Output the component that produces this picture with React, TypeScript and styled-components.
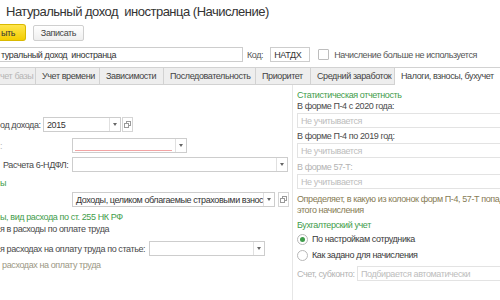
import React from "react";
import styled, { createGlobalStyle, css } from "styled-components";

const GlobalStyle = createGlobalStyle`
  html, body {
    margin: 0;
    padding: 0;
    background: #fff;
  }
  body {
    font-family: "Liberation Sans", Arial, sans-serif;
    font-size: 9px;
    letter-spacing: -0.4px;
    color: #404040;
  }
`;

const GREEN = "#3f9d4b";

const Page = styled.div`
  width: 500px;
  height: 300px;
  overflow: hidden;
  background: #fff;
`;

const Title = styled.h1`
  margin: 0;
  padding: 3px 0 0 6px;
  height: 18px;
  line-height: 18px;
  font-size: 13px;
  letter-spacing: -0.5px;
  font-weight: normal;
  color: #333;
  white-space: nowrap;
`;

const Toolbar = styled.div`
  display: flex;
  align-items: center;
  padding-top: 3px;
  height: 17px;
`;

const MainButton = styled.div`
  box-sizing: border-box;
  width: 26px;
  height: 17px;
  display: flex;
  align-items: center;
  justify-content: flex-end;
  padding-right: 10px;
  background: linear-gradient(#ffe54d, #f3cd00);
  border: 1px solid #d9b900;
  border-left: none;
  border-radius: 0 3px 3px 0;
  color: #333;
`;

const Button = styled.div`
  box-sizing: border-box;
  margin-left: 7px;
  width: 51px;
  height: 16px;
  display: flex;
  align-items: center;
  justify-content: center;
  background: linear-gradient(#ffffff, #efefef);
  border: 1px solid #cfcfcf;
  border-radius: 2px;
  color: #444;
`;

const HeadRow = styled.div`
  display: flex;
  align-items: center;
  margin-top: 6px;
  height: 15px;
  white-space: nowrap;
`;

const Input = styled.div<{ $w: number; $ml?: number; $open?: boolean; $muted?: boolean }>`
  box-sizing: border-box;
  flex: none;
  width: ${(p) => p.$w}px;
  margin-left: ${(p) => p.$ml ?? 0}px;
  height: 15px;
  display: flex;
  align-items: center;
  padding-left: 3px;
  border: 1px solid ${(p) => (p.$muted ? "#e3e3e3" : "#cdcdcd")};
  background: #fff;
  color: ${(p) => (p.$muted ? "#bdbdbd" : "#333")};
  white-space: nowrap;
  overflow: hidden;
  ${(p) =>
    p.$open &&
    css`
      border-left: none;
      padding-left: 1px;
    `}
`;

const Caption = styled.span<{ $ml?: number }>`
  margin-left: ${(p) => p.$ml ?? 0}px;
  color: #555;
`;

const CheckBox = styled.span`
  box-sizing: border-box;
  flex: none;
  margin-left: 8px;
  width: 11px;
  height: 11px;
  border: 1px solid #bdbdbd;
  border-radius: 1px;
  background: #fff;
`;

const TabBar = styled.div`
  display: flex;
  margin-top: 5px;
  height: 18px;
  white-space: nowrap;
`;

const Tab = styled.div<{ $w: number; $pl?: number; $active?: boolean; $disabled?: boolean }>`
  box-sizing: border-box;
  flex: none;
  width: ${(p) => p.$w}px;
  display: flex;
  align-items: center;
  padding-left: ${(p) => p.$pl ?? 6}px;
  border: 1px solid #d2d2d2;
  border-left: none;
  overflow: hidden;
  background: ${(p) => (p.$active ? "#fff" : "#eeeeee")};
  color: ${(p) => (p.$disabled ? "#b5b5b5" : "#444")};
  ${(p) =>
    p.$active &&
    css`
      border-bottom-color: #fff;
    `}
`;

const Body = styled.div`
  display: grid;
  grid-template-columns: 293px 1fr;
  height: 215px;
`;

const LeftCol = styled.div`
  box-sizing: border-box;
  border-right: 1px solid #e6e6e6;
  padding-top: 32px;
  white-space: nowrap;
  overflow: hidden;
`;

const RightCol = styled.div`
  padding-left: 4px;
  padding-top: 5px;
  white-space: nowrap;
  overflow: hidden;
`;

const FieldRow = styled.div<{ $mt?: number }>`
  display: flex;
  align-items: center;
  height: 15px;
  margin-top: ${(p) => p.$mt ?? 0}px;
`;

const Label = styled.span<{ $w: number; $pl?: number; $muted?: boolean }>`
  box-sizing: border-box;
  flex: none;
  width: ${(p) => p.$w}px;
  padding-left: ${(p) => p.$pl ?? 0}px;
  color: ${(p) => (p.$muted ? "#b3b3b3" : "#4a4a4a")};
`;

const Line = styled.div<{ $mt?: number; $tone?: "green" | "olive" | "grey" | "muted" }>`
  height: 11px;
  line-height: 11px;
  margin-top: ${(p) => p.$mt ?? 0}px;
  color: ${(p) =>
    p.$tone === "green"
      ? GREEN
      : p.$tone === "olive"
      ? "#877c55"
      : p.$tone === "grey"
      ? "#9b9784"
      : p.$tone === "muted"
      ? "#b3b3b3"
      : "#4a4a4a"};
`;

const Combo = styled.div<{ $w: number; $required?: boolean }>`
  box-sizing: border-box;
  flex: none;
  width: ${(p) => p.$w}px;
  height: 15px;
  display: flex;
  align-items: stretch;
  border: 1px solid #cdcdcd;
  background: #fff;
  ${(p) =>
    p.$required &&
    css`
      background: linear-gradient(#f2a4a4, #f2a4a4) no-repeat 2px calc(100% - 1px) /
          calc(100% - 16px) 1px,
        #fff;
    `}
`;

const ComboText = styled.span`
  flex: 1;
  display: flex;
  align-items: center;
  padding-left: 3px;
  overflow: hidden;
  color: #333;
`;

const Arrow = styled.span`
  flex: none;
  width: 10px;
  border-left: 1px solid #e0e0e0;
  display: flex;
  align-items: center;
  justify-content: center;
  &::after {
    content: "";
    border-left: 2px solid transparent;
    border-right: 2px solid transparent;
    border-top: 3px solid #666;
  }
`;

const OpenButton = styled.span<{ $ml?: number }>`
  box-sizing: border-box;
  flex: none;
  width: 11px;
  height: 15px;
  margin-left: ${(p) => p.$ml ?? 1}px;
  border: 1px solid #d5d5d5;
  display: flex;
  align-items: center;
  justify-content: center;
  background: #fff;
`;

const Field = styled(Input)`
  margin-top: 1px;
`;

const RadioRow = styled.div<{ $mt?: number }>`
  display: flex;
  align-items: center;
  height: 14px;
  margin-top: ${(p) => p.$mt ?? 0}px;
  color: #3a3a3a;
`;

const Radio = styled.span<{ $on?: boolean }>`
  box-sizing: border-box;
  flex: none;
  width: 11px;
  height: 11px;
  margin-right: 4px;
  border: 1px solid #b8b8b8;
  border-radius: 50%;
  display: flex;
  align-items: center;
  justify-content: center;
  &::after {
    content: "";
    width: 5px;
    height: 5px;
    border-radius: 50%;
    background: ${(p) => (p.$on ? GREEN : "transparent")};
  }
`;

const OpenIcon = () => (
  <svg width="7" height="7" viewBox="0 0 7 7">
    <rect x="2.5" y="0.5" width="4" height="4" fill="none" stroke="#9a9a9a" />
    <rect x="0.5" y="2.5" width="4" height="4" fill="#fff" stroke="#9a9a9a" />
  </svg>
);

const App = () => {
  return (
    <Page>
      <GlobalStyle />
      <Title>Натуральный доход&nbsp; иностранца (Начисление)</Title>
      <Toolbar>
        <MainButton>ыть</MainButton>
        <Button>Записать</Button>
      </Toolbar>
      <HeadRow>
        <Input $w={243} $open>
          туральный доход&nbsp; иностранца
        </Input>
        <Caption $ml={4}>Код:</Caption>
        <Input $w={40} $ml={7}>
          НАТДХ
        </Input>
        <CheckBox />
        <Caption $ml={5}>Начисление больше не используется</Caption>
      </HeadRow>
      <TabBar>
        <Tab $w={36} $pl={0} $disabled>
          чет базы
        </Tab>
        <Tab $w={64}>Учет времени</Tab>
        <Tab $w={64}>Зависимости</Tab>
        <Tab $w={92}>Последовательность</Tab>
        <Tab $w={55}>Приоритет</Tab>
        <Tab $w={84}>Средний заработок</Tab>
        <Tab $w={120} $active>
          Налоги, взносы, бухучет
        </Tab>
      </TabBar>
      <Body>
        <LeftCol>
          <FieldRow>
            <Label $w={43}>од дохода:</Label>
            <Combo $w={78}>
              <ComboText>2015</ComboText>
              <Arrow />
            </Combo>
            <OpenButton>
              <OpenIcon />
            </OpenButton>
          </FieldRow>
          <FieldRow $mt={6}>
            <Label $w={72} $muted>
              :
            </Label>
            <Combo $w={115} $required>
              <ComboText />
              <Arrow />
            </Combo>
          </FieldRow>
          <FieldRow $mt={4}>
            <Label $w={72} $pl={3}>
              Расчета 6-НДФЛ:
            </Label>
            <Combo $w={216}>
              <ComboText />
              <Arrow />
            </Combo>
          </FieldRow>
          <Line $mt={6} $tone="green">
            ы
          </Line>
          <FieldRow $mt={3}>
            <Label $w={72} />
            <Combo $w={203}>
              <ComboText>Доходы, целиком облагаемые страховыми взносами</ComboText>
              <Arrow />
            </Combo>
            <OpenButton $ml={3}>
              <OpenIcon />
            </OpenButton>
          </FieldRow>
          <Line $mt={5} $tone="green">
            ы, вид расхода по ст. 255 НК РФ
          </Line>
          <Line $mt={1}>я в расходы по оплате труда</Line>
          <FieldRow $mt={6}>
            <Label $w={149}>я расходах на оплату труда по статье:</Label>
            <Combo $w={116}>
              <ComboText />
              <Arrow />
            </Combo>
          </FieldRow>
          <Line $mt={4} $tone="grey">
            &nbsp;расходах на оплату труда
          </Line>
        </LeftCol>
        <RightCol>
          <Line $tone="green">Статистическая отчетность</Line>
          <Line>В форме П-4 с 2020 года:</Line>
          <Field $w={215} $muted>
            Не учитывается
          </Field>
          <Line $mt={3}>В форме П-4 по 2019 год:</Line>
          <Field $w={215} $muted>
            Не учитывается
          </Field>
          <Line $mt={4} $tone="muted">
            В форме 57-Т:
          </Line>
          <Field $w={215} $muted>
            Не учитывается
          </Field>
          <Line $mt={5} $tone="olive">
            Определяет, в какую из колонок форм П-4, 57-Т попадает сумма
          </Line>
          <Line $tone="olive">этого начисления</Line>
          <Line $mt={4} $tone="green">
            Бухгалтерский учет
          </Line>
          <RadioRow $mt={1}>
            <Radio $on />
            По настройкам сотрудника
          </RadioRow>
          <RadioRow $mt={2}>
            <Radio />
            Как задано для начисления
          </RadioRow>
          <FieldRow $mt={4}>
            <Label $w={60} $muted>
              Счет, субконто:
            </Label>
            <Input $w={160} $muted>
              Подбирается автоматически
            </Input>
          </FieldRow>
        </RightCol>
      </Body>
    </Page>
  );
};

export default App;
